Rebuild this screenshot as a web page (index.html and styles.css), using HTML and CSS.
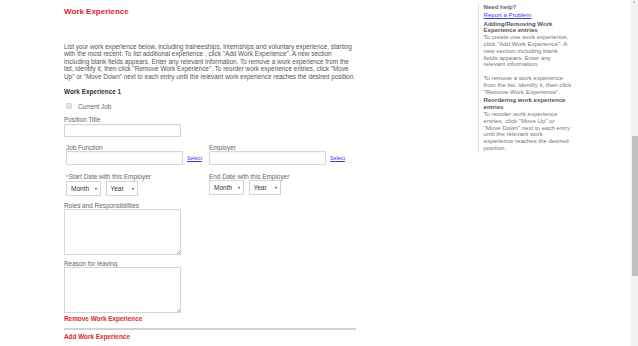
FILE: index.html
```html
<!DOCTYPE html>
<html lang="en">

<head>
    <meta charset="UTF-8">
    <meta name="viewport" content="width=device-width, initial-scale=1.0">
    <title>Work Experience</title>
    <link rel="stylesheet" href="styles.css">
</head>

<body>
    <div class="page">
        <!-- Formulario principal -->
        <form class="main">
            <h1 class="title">Work Experience</h1>
            <p class="intro">List your work experience below, including traineeships, internships and voluntary experience, starting with the most recent. To list additional experience , click "Add Work Experience". A new section including blank fields appears. Enter any relevant information. To remove a work experience from the list, identify it, then click "Remove Work Experience". To reorder work experience entries, click "Move Up" or "Move Down" next to each entry until the relevant work experience reaches the desired position.</p>

            <h2 class="entry-title">Work Experience 1</h2>
            <label class="check"><span class="box"></span>Current Job</label>

            <div class="field">
                <label for="position">Position Title</label>
                <input type="text" id="position" class="text">
            </div>

            <div class="row">
                <div class="col">
                    <label for="jobFunction">Job Function</label>
                    <div class="pick">
                        <input type="text" id="jobFunction" class="text">
                        <a href="#">Select</a>
                    </div>
                </div>
                <div class="col">
                    <label for="employer">Employer</label>
                    <div class="pick">
                        <input type="text" id="employer" class="text">
                        <a href="#">Select</a>
                    </div>
                </div>
            </div>

            <div class="row dates-row">
                <div class="col">
                    <label><span class="req">*</span>Start Date with this Employer</label>
                    <div class="dates">
                        <span class="sel month"><select><option>Month</option></select></span>
                        <span class="sel year"><select><option>Year</option></select></span>
                    </div>
                </div>
                <div class="col">
                    <label>End Date with this Employer</label>
                    <div class="dates">
                        <span class="sel month"><select><option>Month</option></select></span>
                        <span class="sel year"><select><option>Year</option></select></span>
                    </div>
                </div>
            </div>

            <div class="field roles">
                <label for="roles">Roles and Responsibilities</label>
                <div class="area"><textarea id="roles"></textarea></div>
            </div>

            <div class="field reason">
                <label for="reason">Reason for leaving</label>
                <div class="area"><textarea id="reason"></textarea></div>
            </div>

            <a href="#" class="action remove">Remove Work Experience</a>
            <hr>
            <a href="#" class="action add">Add Work Experience</a>
        </form>

        <!-- Ayuda lateral -->
        <aside class="help">
            <p class="help-title">Need help?</p>
            <a href="#" class="report">Report a Problem</a>
            <h4>Adding/Removing Work Experience entries</h4>
            <p>To create one work experience, click "Add Work Experience". A new section including blank fields appears. Enter any relevant information.<br><br>To remove a work experience from the list, identify it, then click "Remove Work Experience".</p>
            <h4>Reordering work experience entries</h4>
            <p>To reorder work experience entries, click "Move Up" or "Move Down" next to each entry until the relevant work experience reaches the desired position.</p>
        </aside>
    </div>

    <div class="scrollbar"><span class="arrow"></span><span class="thumb"></span></div>
</body>

</html>
```

FILE: styles.css
```css
body {
    margin: 0;
    font-family: "Liberation Sans", Arial, sans-serif;
    color: #555;
    background: #fff;
    overflow: hidden;
}

.page {
    display: flex;
    align-items: flex-start;
    padding-left: 64px;
}

.main {
    width: 292px;
    font-size: 6.4px;
    line-height: 7px;
}

.title {
    margin: 7px 0 0;
    font-size: 8px;
    line-height: 10px;
    color: #d9262f;
}

.intro {
    margin: 25.5px 0 0;
    font-size: 6.4px;
    line-height: 7.6px;
    color: #555;
}

.entry-title {
    margin: 7.5px 0 0;
    font-size: 6.4px;
    line-height: 8px;
    color: #333;
}

.check {
    display: flex;
    align-items: center;
    height: 8px;
    margin-top: 6.5px;
    padding-left: 2px;
    font-size: 6.4px;
    color: #666;
}

.box {
    width: 4px;
    height: 4px;
    margin-right: 6px;
    border: 1px solid #d2d2d2;
    border-radius: 1.5px;
    background: #e6e6e6;
}

.field {
    margin-top: 6px;
}

.field label,
.col label {
    display: block;
    font-size: 6.4px;
    line-height: 7px;
    color: #666;
    margin-bottom: 0.5px;
}

.text {
    display: block;
    box-sizing: border-box;
    width: 117px;
    height: 13.5px;
    margin: 0;
    padding: 0 2px;
    border: 1px solid #d6d6d6;
    font-size: 6.4px;
    box-shadow: inset 0 1px 1px rgba(0, 0, 0, 0.04);
}

.row {
    display: flex;
    padding-left: 2px;
    margin-top: 6.5px;
}

.row .text {
    height: 14px;
}

.dates-row {
    margin-top: 7.5px;
}

.col {
    width: 143px;
}

.pick {
    display: flex;
    align-items: center;
}

.pick a {
    margin: 1px 0 0 4px;
    font-size: 5.4px;
    color: #3b3bd9;
}

.req {
    color: #d9262f;
    font-size: 5px;
    margin-right: 0.5px;
}

.dates {
    display: flex;
    gap: 4.5px;
}

.sel {
    position: relative;
    display: block;
}

.sel select {
    display: block;
    box-sizing: border-box;
    height: 15px;
    margin: 0;
    padding: 0 0 0 4px;
    border: 1px solid #d4d4d4;
    border-radius: 0;
    background: #fff;
    font-family: inherit;
    font-size: 6.5px;
    color: #333;
    appearance: none;
    -webkit-appearance: none;
}

.month select {
    width: 35px;
}

.year select {
    width: 32px;
}

.sel::after {
    content: "";
    position: absolute;
    right: 4px;
    top: 6.5px;
    border-left: 1.3px solid transparent;
    border-right: 1.3px solid transparent;
    border-top: 2px solid #333;
}

.roles {
    margin-top: 5.5px;
}

.reason {
    margin-top: 4.5px;
}

.area {
    position: relative;
    width: 117px;
}

.area textarea {
    display: block;
    box-sizing: border-box;
    width: 117px;
    height: 46px;
    margin: 0;
    border: 1px solid #d6d6d6;
    resize: none;
}

.area::after {
    content: "";
    position: absolute;
    right: 1.5px;
    bottom: 1.5px;
    width: 3px;
    height: 3px;
    background: linear-gradient(135deg, transparent 40%, #aaa 40%, #aaa 55%, transparent 55%, transparent 75%, #aaa 75%, #aaa 90%, transparent 90%);
}

.action {
    display: block;
    font-size: 6.4px;
    line-height: 8px;
    font-weight: bold;
    color: #d9262f;
    text-decoration: none;
}

.remove {
    margin-top: 2px;
}

hr {
    margin: 5px 0 0;
    height: 1.5px;
    border: none;
    background: #d2d2d2;
}

.add {
    margin-top: 3px;
}

.help {
    width: 89px;
    margin: 4px 0 0 122px;
    padding-left: 4.5px;
    border-left: 1px solid #ddd;
    font-size: 6.1px;
    line-height: 6.8px;
    color: #777;
}

.help p {
    margin: 0;
}

.help .help-title {
    font-weight: bold;
    color: #666;
}

.report {
    display: block;
    margin-top: 1.2px;
    color: #3b3bee;
}

.help h4 {
    margin: 1.9px 0 0;
    font-size: 6.1px;
    color: #555;
}

.scrollbar {
    position: fixed;
    top: 0;
    right: 0;
    width: 7px;
    height: 346px;
    background: #f1f1f1;
}

.arrow {
    position: absolute;
    top: 1px;
    left: 2px;
    border-left: 1.5px solid transparent;
    border-right: 1.5px solid transparent;
    border-bottom: 2px solid #a3a3a3;
}

.thumb {
    position: absolute;
    top: 136px;
    left: 0.5px;
    width: 6px;
    height: 140px;
    background: #c1c1c1;
}
```
